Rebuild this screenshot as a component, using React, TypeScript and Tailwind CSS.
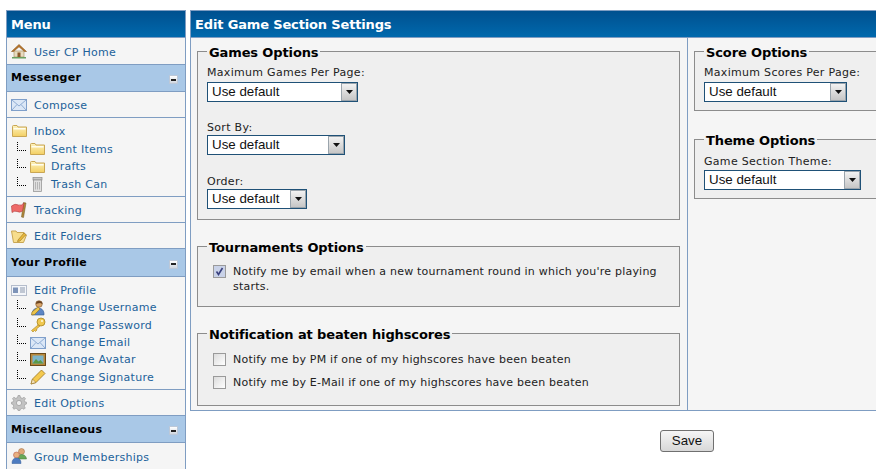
import React from "react";

const Home = () => (
  <svg width="16" height="16" viewBox="0 0 16 16">
    <rect x="3" y="8" width="10" height="6" fill="#e8dcc0" stroke="#a08a60" strokeWidth="0.6" />
    <path d="M0.5 8.5 L8 1.5 L15.5 8.5 L13.5 8.5 L8 3.8 L2.5 8.5Z" fill="#b8742a" stroke="#8a5518" strokeWidth="0.6" />
    <rect x="6.5" y="9.5" width="3" height="4.5" fill="#8a5a2a" />
    <rect x="1" y="14" width="14" height="1.5" fill="#6aa060" />
  </svg>
);
const Mail = () => (
  <svg width="16" height="12" viewBox="0 0 16 12">
    <rect x="0.5" y="0.5" width="15" height="11" fill="#dbe7f6" stroke="#7f9fca" />
    <path d="M1 1 L8 7 L15 1 M1 11 L6 5.5 M15 11 L10 5.5" fill="none" stroke="#8fadd4" />
  </svg>
);
const Folder = () => (
  <svg width="15" height="12" viewBox="0 0 15 12">
    <defs>
      <linearGradient id="fg" x1="0" y1="0" x2="0" y2="1">
        <stop offset="0" stopColor="#fdf3c0" />
        <stop offset="1" stopColor="#f3cf62" />
      </linearGradient>
    </defs>
    <path d="M0.5 1.5 Q0.5 0.5 1.5 0.5 L5 0.5 L6 2 L14.5 2 L14.5 11.5 L0.5 11.5Z" fill="url(#fg)" stroke="#c9a654" />
    <rect x="1.5" y="3" width="12" height="1.5" fill="#fffdf0" />
  </svg>
);
const Trash = () => (
  <svg width="11" height="15" viewBox="0 0 11 15">
    <rect x="1" y="0.5" width="9" height="2.5" fill="#c8c8c8" stroke="#8c8c8c" strokeWidth="0.7" />
    <rect x="1.5" y="3" width="8" height="11.5" fill="#e0e0e0" stroke="#8c8c8c" strokeWidth="0.7" />
    <path d="M3.5 5 V12.5 M5.5 5 V12.5 M7.5 5 V12.5" stroke="#a4a4a4" strokeWidth="0.7" />
  </svg>
);
const Flag = () => (
  <svg width="16" height="16" viewBox="0 0 16 16">
    <path d="M12.5 0.5 L15 1 L12.5 15.5 L10.5 15Z" fill="#b0883a" stroke="#6e5420" strokeWidth="0.5" />
    <path d="M0.5 4 Q4 1 7.5 3 Q10.5 4 13 1 L11.5 9 Q9 11 6 9.5 Q3.5 8.5 1 10.5Z" fill="#ee6a68" stroke="#b23a3a" strokeWidth="0.6" />
  </svg>
);
const EditFolder = () => (
  <svg width="16" height="14" viewBox="0 0 16 14">
    <path d="M0.5 2 L5 2 L6 3.5 L13 3.5 L13 6 L15.5 6 L12.5 13.5 L2.5 13.5Z" fill="#f7dd8c" stroke="#c9a654" />
    <path d="M7 11 L13 4 L15 5.5 L9 12 L6.5 12.5Z" fill="#e9b93c" stroke="#9a7420" strokeWidth="0.6" />
  </svg>
);
const Card = () => (
  <svg width="16" height="11" viewBox="0 0 16 11">
    <rect x="0.5" y="0.5" width="15" height="10" fill="#f4f6fa" stroke="#b4bccb" />
    <rect x="2" y="2.5" width="5" height="5.5" fill="#7d93b8" />
    <path d="M9 3 H14 M9 5 H14 M9 7 H14" stroke="#8c98ac" />
  </svg>
);
const UserPen = () => (
  <svg width="17" height="16" viewBox="0 0 17 16">
    <circle cx="10" cy="4" r="3.3" fill="#d9a56a" stroke="#7a5226" strokeWidth="0.6" />
    <path d="M10 1 Q13.5 1 13.5 4 L11 3 Q8 3.5 7 4 Q7 1 10 1Z" fill="#6a4320" />
    <path d="M3 15 Q3 8 9 8 Q14 8 15 13 L15 15Z" fill="#5d86c4" stroke="#335a92" strokeWidth="0.6" />
    <path d="M3 12 L9 7 L11 9 L5.5 14.5 L2.5 15Z" fill="#ecc54a" stroke="#93701c" strokeWidth="0.6" />
  </svg>
);
const Key = () => (
  <svg width="16" height="16" viewBox="0 0 16 16">
    <circle cx="11" cy="5" r="4" fill="#f0c850" stroke="#a98520" strokeWidth="0.8" />
    <circle cx="12" cy="4" r="1.1" fill="#fff8d8" />
    <path d="M8 8 L1.5 13.5 L3 15 L4.5 13.5 L5.5 14.5 L7 13 L6.5 12 L10 9Z" fill="#ecc048" stroke="#a98520" strokeWidth="0.6" />
  </svg>
);
const Avatar = () => (
  <svg width="16" height="13" viewBox="0 0 16 13">
    <rect x="0.5" y="0.5" width="15" height="12" fill="#b8873a" stroke="#6b4c1c" />
    <rect x="2.5" y="2.5" width="11" height="8" fill="#7cb4c8" />
    <path d="M2.5 10.5 L6 6 L8.5 8.5 L10.5 7 L13.5 10.5Z" fill="#5c9a48" />
  </svg>
);
const Pencil = () => (
  <svg width="16" height="16" viewBox="0 0 16 16">
    <path d="M1 15 L2.5 10 L11.5 1 L15 4.5 L6 13.5Z" fill="#f4c94e" stroke="#9a7420" strokeWidth="0.8" />
    <path d="M1 15 L2.5 10 L6 13.5Z" fill="#f5e4c0" stroke="#9a7420" strokeWidth="0.6" />
  </svg>
);
const Gear = () => (
  <svg width="16" height="16" viewBox="0 0 16 16">
    <path d="M7 0.5 H9 L9.5 2.6 L11.3 3.3 L13.1 2.2 L14.5 3.6 L13.4 5.4 L14 7 L15.5 7.2 V9 L13.9 9.5 L13.3 11.2 L14.3 13 L13 14.3 L11.2 13.3 L9.5 14 L9 15.5 H7 L6.5 14 L4.8 13.3 L3 14.3 L1.7 13 L2.7 11.2 L2.1 9.5 L0.5 9 V7.2 L2 7 L2.6 5.4 L1.5 3.6 L2.9 2.2 L4.7 3.3 L6.5 2.6Z" fill="#c2c2c2" stroke="#8a8a8a" strokeWidth="0.5" />
    <circle cx="8" cy="8" r="2.6" fill="#f0f0f0" stroke="#8a8a8a" strokeWidth="0.6" />
  </svg>
);
const Group = () => (
  <svg width="16" height="16" viewBox="0 0 16 16">
    <circle cx="10.5" cy="3.5" r="3" fill="#e0a878" stroke="#9a6a3a" strokeWidth="0.5" />
    <path d="M7 11 Q7 6.5 10.5 6.5 Q15 6.5 15.5 11Z" fill="#68a858" stroke="#44783a" strokeWidth="0.5" />
    <circle cx="5.5" cy="7" r="3" fill="#e8b080" stroke="#b04a3a" strokeWidth="0.5" />
    <path d="M1 15.5 Q1 10 5.5 10 Q10 10 10 15.5Z" fill="#4e7cc0" stroke="#2e5a98" strokeWidth="0.5" />
  </svg>
);

const linkClass = "text-[11px] leading-none tracking-[0.27px] text-[#22629a] whitespace-nowrap";

function Row({ icon, label, h }: { icon: React.ReactNode; label: string; h: string }) {
  return (
    <div className={`flex items-center pl-[4px] border-b border-[#7f9dc2] bg-[#f5f5f5] ${h}`}>
      <span className="w-[16px] flex justify-center items-center shrink-0">{icon}</span>
      <span className={`${linkClass} ml-[7px] mt-[2px]`}>{label}</span>
    </div>
  );
}

function Sub({ icon, label, h }: { icon: React.ReactNode; label: string; h: string }) {
  return (
    <div className={`flex items-center pl-[10px] ${h}`}>
      <span className="w-[9px] h-[9px] border-l border-b border-dotted border-black shrink-0 -mt-[6px]" />
      <span className="w-[17px] ml-[3px] flex justify-center items-center shrink-0">{icon}</span>
      <span className={`${linkClass} ml-[5px]`}>{label}</span>
    </div>
  );
}

function Parent({ icon, label }: { icon: React.ReactNode; label: string }) {
  return (
    <div className="flex items-center h-[18px] pl-[4px]">
      <span className="w-[16px] flex justify-center items-center shrink-0">{icon}</span>
      <span className={`${linkClass} ml-[7px]`}>{label}</span>
    </div>
  );
}

function Category({ label, h, lift = "-mt-[1px]" }: { label: string; h: string; lift?: string }) {
  return (
    <div className={`flex items-center justify-between pl-[4px] pr-[7px] bg-[#a9c8e7] border-b border-[#7f9dc2] ${h}`}>
      <span className={`text-[11px] font-bold tracking-[0.3px] text-black leading-none ${lift}`}>{label}</span>
      <span className="w-[9px] h-[9px] mt-[3px] bg-gradient-to-b from-white to-[#cfd6df] border border-[#bcc8d8] flex items-center justify-center">
        <span className="w-[5px] h-[2px] bg-[#222]" />
      </span>
    </div>
  );
}

function Select({ w }: { w: string }) {
  return (
    <div className={`flex items-center h-[20px] border border-[#1f5177] bg-white ${w}`}>
      <span className="flex-1 pl-[4px] text-[13.33px] leading-none text-[#111] font-['Liberation_Sans',Arial,sans-serif]">Use default</span>
      <span className="w-[16px] h-[18px] bg-gradient-to-b from-[#f2f2f2] to-[#c6c6c6] border border-[#9aa4ac] flex items-center justify-center">
        <svg width="7" height="4" viewBox="0 0 7 4"><path d="M0 0 H7 L3.5 4Z" fill="#111" /></svg>
      </span>
    </div>
  );
}

function Group2({ title, className, children }: { title: string; className: string; children: React.ReactNode }) {
  return (
    <fieldset className={`border border-[#8c8c8c] bg-[#efefef] pl-[9px] pr-[6px] min-w-0 shrink-0 ${className}`}>
      <legend className="pt-[4px] px-[2px] text-[13px] font-bold tracking-[-0.12px] leading-[16px] text-black whitespace-nowrap">{title}</legend>
      {children}
    </fieldset>
  );
}

function Field({ label, w, className = "", gap }: { label: string; w: string; className?: string; gap: string }) {
  return (
    <div className={className}>
      <div className={`text-[11px] leading-[14px] tracking-[0.3px] text-[#222] whitespace-nowrap ${gap}`}>{label}</div>
      <Select w={w} />
    </div>
  );
}

function Check({ checked, children }: { checked?: boolean; children: React.ReactNode }) {
  return (
    <div className="flex items-start pl-[6px]">
      <span className={`w-[13px] h-[13px] mt-[1px] shrink-0 border border-[#9a9a9a] flex items-center justify-center ${checked ? "bg-[#c9d2e8]" : "bg-gradient-to-br from-[#dcdcdc] to-white"}`}>
        {checked && (
          <svg width="9" height="9" viewBox="0 0 9 9"><path d="M1.5 4.5 L3.5 7.5 L7.5 1" fill="none" stroke="#39407e" strokeWidth="1.6" /></svg>
        )}
      </span>
      <span className="ml-[7px] text-[11px] leading-[15px] tracking-[0.22px] text-[#222] w-[440px]">{children}</span>
    </div>
  );
}

export default function App() {
  return (
    <div className="w-[876px] h-[469px] overflow-hidden bg-white flex items-start pt-[10px] pl-[6px] font-['DejaVu_Sans',Verdana,sans-serif]">
      <aside className="w-[180px] shrink-0 border-l border-r border-[#7f9dc2]">
        <div className="h-[28px] border-t border-b border-[#7f9dc2] bg-gradient-to-b from-[#00508f] to-[#0069ad] flex items-center pl-[4px] pt-[2px] text-[13px] font-bold tracking-[-0.15px] text-white">Menu</div>
        <Row h="h-[27px]" icon={<Home />} label="User CP Home" />
        <Category h="h-[27px]" label="Messenger" />
        <Row h="h-[26px]" icon={<Mail />} label="Compose" />
        <div className="h-[79px] pt-[4px] border-b border-[#7f9dc2] bg-[#f5f5f5]">
          <Parent icon={<Folder />} label="Inbox" />
          <Sub h="h-[18px]" icon={<Folder />} label="Sent Items" />
          <Sub h="h-[17px]" icon={<Folder />} label="Drafts" />
          <Sub h="h-[18px]" icon={<Trash />} label="Trash Can" />
        </div>
        <Row h="h-[26px]" icon={<Flag />} label="Tracking" />
        <Row h="h-[26px]" icon={<EditFolder />} label="Edit Folders" />
        <Category h="h-[28px]" label="Your Profile" />
        <div className="h-[113px] pt-[4px] border-b border-[#7f9dc2] bg-[#f5f5f5]">
          <Parent icon={<Card />} label="Edit Profile" />
          <Sub h="h-[17px]" icon={<UserPen />} label="Change Username" />
          <Sub h="h-[18px]" icon={<Key />} label="Change Password" />
          <Sub h="h-[17px]" icon={<Mail />} label="Change Email" />
          <Sub h="h-[17px]" icon={<Avatar />} label="Change Avatar" />
          <Sub h="h-[18px]" icon={<Pencil />} label="Change Signature" />
        </div>
        <Row h="h-[26px]" icon={<Gear />} label="Edit Options" />
        <Category h="h-[27px]" lift="mt-[1px]" label="Miscellaneous" />
        <Row h="h-[27px]" icon={<Group />} label="Group Memberships" />
      </aside>

      <main className="w-[700px] shrink-0 ml-[4px]">
        <div className="border border-[#7f9dc2]">
          <div className="h-[27px] border-b border-[#7f9dc2] bg-gradient-to-b from-[#00508f] to-[#0069ad] flex items-center pl-[4px] pt-[2px] text-[13px] font-bold tracking-[-0.15px] text-white whitespace-nowrap">Edit Game Section Settings</div>
          <div className="flex h-[372px]">
            <div className="w-[497px] shrink-0 border-r border-[#7f9dc2] bg-[#f5f5f5] pt-[3px] pl-[6px] pr-[7px] flex flex-col gap-[16px]">
              <Group2 title="Games Options" className="h-[179px]">
                <Field label="Maximum Games Per Page:" w="w-[151px]" gap="mb-[2px]" className="mt-[5px]" />
                <Field label="Sort By:" w="w-[138px]" gap="" className="mt-[19px]" />
                <Field label="Order:" w="w-[100px]" gap="" className="mt-[20px]" />
              </Group2>
              <Group2 title="Tournaments Options" className="h-[71px] pt-[8px]">
                <Check checked>Notify me by email when a new tournament round in which you're playing starts.</Check>
              </Group2>
              <Group2 title="Notification at beaten highscores" className="h-[83px] pt-[9px]">
                <div className="flex flex-col gap-[8px]">
                  <Check>Notify me by PM if one of my highscores have been beaten</Check>
                  <Check>Notify me by E-Mail if one of my highscores have been beaten</Check>
                </div>
              </Group2>
            </div>
            <div className="flex-1 bg-[#f5f5f5] pt-[3px] pl-[6px] flex flex-col gap-[18px]">
              <Group2 title="Score Options" className="h-[70px] w-[300px]">
                <Field label="Maximum Scores Per Page:" w="w-[143px]" gap="mb-[2px]" className="mt-[5px]" />
              </Group2>
              <Group2 title="Theme Options" className="h-[70px] w-[300px]">
                <Field label="Game Section Theme:" w="w-[157px]" gap="mb-[1px]" className="mt-[6px]" />
              </Group2>
            </div>
          </div>
        </div>
        <div className="pt-[17px] pl-[470px]">
          <button className="w-[54px] h-[22px] rounded-[3px] border border-[#707070] bg-gradient-to-b from-[#f6f6f6] to-[#d8d8d8] text-[13.33px] leading-none text-[#111] font-['Liberation_Sans',Arial,sans-serif]">Save</button>
        </div>
      </main>
    </div>
  );
}
